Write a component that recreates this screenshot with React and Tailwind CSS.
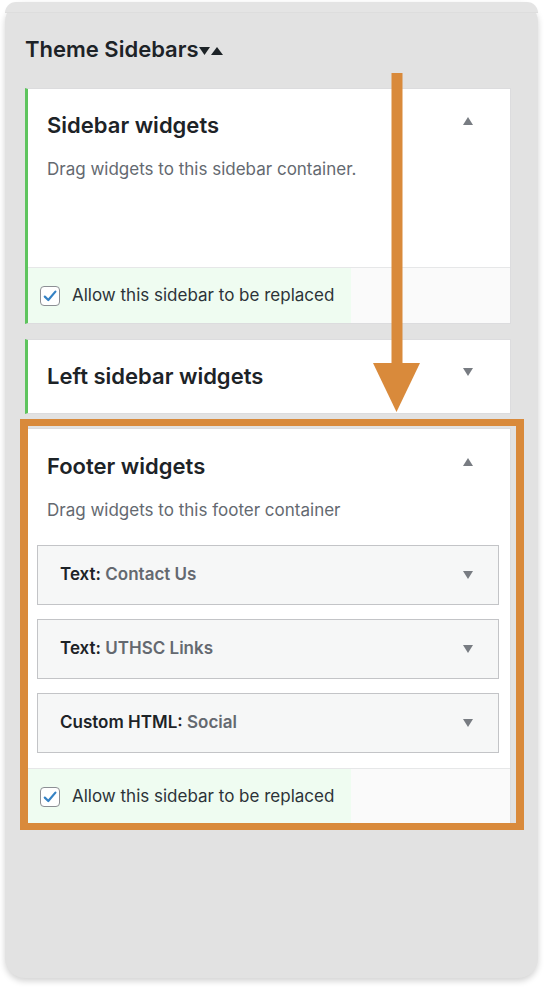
const Caret = ({ up }) => (
  <svg width="10" height="8" viewBox="0 0 10 8" className="shrink-0">
    {up ? <polygon points="5,0 10,8 0,8" fill="#787c82" /> : <polygon points="0,0 10,0 5,8" fill="#787c82" />}
  </svg>
);

const Checkbox = () => (
  <span className="flex h-[20px] w-[20px] shrink-0 items-center justify-center rounded-[4px] border border-[#8c8f94] bg-white">
    <svg width="16" height="16" viewBox="0 0 16 16">
      <path d="M2.8 8.6 L6.3 12 L13.4 3.6" fill="none" stroke="#3582c4" strokeWidth="2.2" strokeLinecap="round" strokeLinejoin="round" />
    </svg>
  </span>
);

const PanelFooter = () => (
  <div className="flex h-[56px] border-t border-[#e6e7e8] bg-[#fafafa]">
    <label className="flex w-[323px] items-center gap-[12px] bg-[#effcf1] pl-[12px] text-[17px] text-[#2c3338]">
      <Checkbox />
      Allow this sidebar to be replaced
    </label>
  </div>
);

const Widget = ({ type, title }) => (
  <div className="flex h-[60px] items-center justify-between border border-[#c3c4c7] bg-[#f6f7f7] pl-[22px] pr-[25px] text-[17px] font-semibold">
    <span className="text-[#1d2327]">
      {type}: <span className="text-[#646970]">{title}</span>
    </span>
    <Caret />
  </div>
);

const widgets = [
  { type: 'Text', title: 'Contact Us' },
  { type: 'Text', title: 'UTHSC Links' },
  { type: 'Custom HTML', title: 'Social' },
];

export default function App() {
  return (
    <div className="min-h-[990px] bg-white px-[5px] pt-[2px]" style={{ fontFamily: 'Inter, "Noto Sans", sans-serif' }}>
      <div className="relative h-[976px] w-[533px] rounded-[20px] bg-[#e2e2e2] shadow-[0_3px_6px_rgba(0,0,0,0.18)]">
        <div className="h-[11px] rounded-t-[20px] border-b border-[#dddddd] bg-[#e4e4e4]" />

        <div className="pl-[20px] pr-[27px]">
          <h2 className="mt-[22px] flex items-center text-[22px] font-semibold leading-[28px] text-[#1d2327]">
            Theme Sidebars
            <svg width="24" height="10" viewBox="0 0 24 10" className="mt-[3px]">
              <polygon points="0,1 11,1 5.5,9" fill="#1d2327" />
              <polygon points="18,1 24,9 12,9" fill="#1d2327" />
            </svg>
          </h2>

          {/* Sidebar widgets */}
          <div className="mt-[25px] border border-l-[3px] border-[#dcdcde] border-l-[#5ec45e] bg-white">
            <div className="min-h-[178px] pl-[19px] pr-[37px] pt-[22px]">
              <div className="flex items-center justify-between">
                <h3 className="text-[22px] font-semibold leading-[28px] text-[#1d2327]">Sidebar widgets</h3>
                <span className="-mt-[8px]"><Caret up /></span>
              </div>
              <p className="mt-[19px] text-[17px] leading-[22px] text-[#646970]">Drag widgets to this sidebar container.</p>
            </div>
            <PanelFooter />
          </div>

          {/* Left sidebar widgets */}
          <div className="mt-[15px] border border-l-[3px] border-[#dcdcde] border-l-[#5ec45e] bg-white pb-[23px] pl-[19px] pr-[37px] pt-[22px]">
            <div className="flex items-center justify-between">
              <h3 className="text-[22px] font-semibold leading-[28px] text-[#1d2327]">Left sidebar widgets</h3>
              <span className="-mt-[8px]"><Caret /></span>
            </div>
          </div>

          {/* Footer widgets */}
          <div className="relative mt-[14px] border border-b-0 border-l-[3px] border-[#dcdcde] border-l-[#5ec45e] bg-white">
            <div className="pl-[19px] pr-[37px] pt-[23px]">
              <div className="flex items-center justify-between">
                <h3 className="text-[22px] font-semibold leading-[28px] text-[#1d2327]">Footer widgets</h3>
                <span className="-mt-[8px]"><Caret up /></span>
              </div>
              <p className="mt-[19px] text-[17px] leading-[22px] text-[#646970]">Drag widgets to this footer container</p>
            </div>
            <div className="ml-[9px] mr-[11px] mt-[24px] flex flex-col gap-[14px] pb-[15px]">
              {widgets.map((w) => (
                <Widget key={w.title} type={w.type} title={w.title} />
              ))}
            </div>
            <PanelFooter />

            <div className="pointer-events-none absolute -left-[8px] -top-[10px] h-[411px] w-[504px] border-[7px] border-x-[8px] border-[#d98a3b]" />
          </div>
        </div>

        {/* arrow */}
        <svg width="48" height="341" viewBox="0 0 48 341" className="pointer-events-none absolute left-[368px] top-[71px]">
          <rect x="18.5" y="0" width="11" height="292" fill="#d98a3b" />
          <polygon points="0,290 47,290 23.5,339" fill="#d98a3b" />
        </svg>
      </div>
    </div>
  );
}
